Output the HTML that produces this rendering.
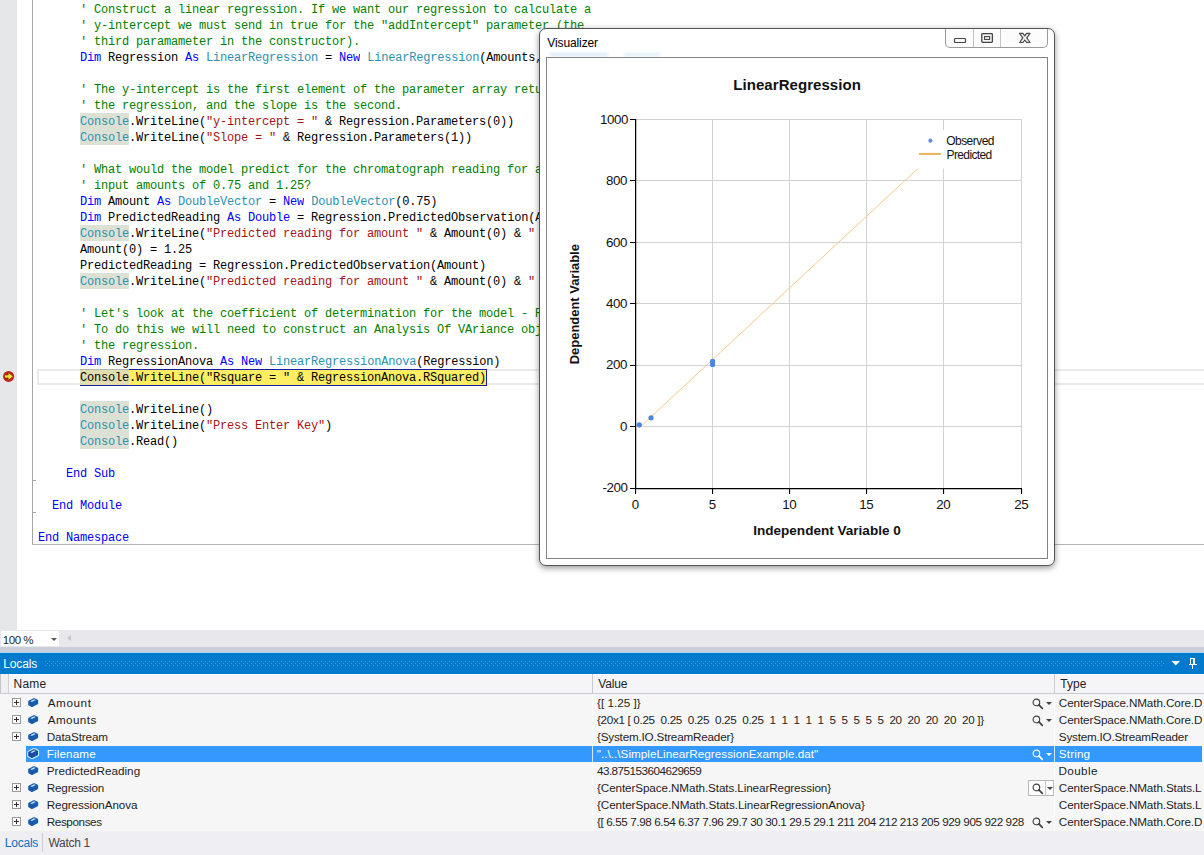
<!DOCTYPE html>
<html><head><meta charset="utf-8"><title>Visualizer</title>
<style>
*{box-sizing:border-box;margin:0;padding:0}
html,body{width:1204px;height:855px;overflow:hidden;background:#fff}
body{position:relative;font-family:"Liberation Sans",sans-serif;font-size:12px;color:#1e1e1e}
.abs{position:absolute}
#margin{left:0;top:0;width:17px;height:630px;background:#e6e7e8}
#outline{left:32px;top:0;width:1px;height:545px;background:#a5a5a5}
#edbot{left:32px;top:544px;width:1172px;height:1px;background:#b4b4b4}
.tick{position:absolute;left:33px;width:3px;height:1px;background:#a5a5a5}
#curline{left:37px;top:369px;width:1180px;height:16px;border:2px solid #eaeaea;border-right:0}
.ln{position:absolute;height:16px;line-height:16px;white-space:pre;font-family:"Liberation Mono",monospace;font-size:12px;letter-spacing:-0.2px;color:#000}
.ln span{display:inline-block;height:16px;line-height:19px;vertical-align:top;overflow:hidden}
.c{color:#008000} .k{color:#0000ff} .t{color:#2b91af} .s{color:#a31515} .n{color:#000}
.r{color:#2b91af;background:#dde1d4}
.cur{top:369px;height:17px!important;line-height:16px}
.ln span.cur1{background:#e0deb0;height:17px;border-top:1px solid #b4b6b0;border-bottom:1px solid #1c1c9e;line-height:17px}
.ln span.cur2{background:#ffee62;height:17px;border-top:1px solid #1c1c9e;border-bottom:1px solid #1c1c9e;border-right:1px solid #1c1c9e;line-height:17px}
/* breakpoint */
#bp{left:2px;top:370px}
/* bottom */
#hscroll{left:0;top:630px;width:1204px;height:17px;background:#e8e8ec}
#zoom{left:1px;top:631px;width:58px;height:15px;background:#fff;font-size:12px;line-height:15px;color:#1e1e1e}
#zoom span{position:absolute;top:1.5px;font-size:11.5px}
#zoomarr{left:50.5px;top:638px;border:3.2px solid transparent;border-top:3.4px solid #555;border-bottom:0}
#scrarr{left:66.5px;top:634.5px;border:3.8px solid transparent;border-right:4px solid #c6c7cf;border-left:0}
#sep1{left:0;top:647px;width:1204px;height:5px;background:#ccced9}
#sep2{left:0;top:651.5px;width:1204px;height:1.5px;background:#a6d3f2}
#tbar{left:0;top:653px;width:1204px;height:21px;background:#007acc;color:#fff}
#tbar span{position:absolute;top:4px;font-size:12px}
#dots{left:45px;top:661px;width:1119px;height:7px}
#hdr{left:0;top:674px;width:1204px;height:20px;background:#f5f5f7;border-top:1px solid #fdfdfe;border-bottom:1px solid #c9cad2}
#hdr span{position:absolute;top:2px;font-size:12px;color:#1e1e1e}
.vsep{position:absolute;top:674px;width:1px;height:19px;background:#c9cbd4}
#grid{left:0;top:694px;width:1204px;height:137px;background:#f6f6f6}
.row{position:absolute;left:0;width:1204px;height:17px;font-size:12px;line-height:16px;white-space:pre;overflow:hidden}
.row::after{content:"";position:absolute;left:0;top:16.5px;width:1204px;height:1px;background:#fbfbfb}
.row span{position:absolute;top:0.5px;height:16.5px}
.row .val{overflow:hidden}
.sel{color:#fff}
.sel::before{content:"";position:absolute;left:26px;top:1px;width:1176px;height:16px;background:#3399ff}
.sel b.v{position:absolute;top:1px;width:1px;height:16px;background:#d6eaff}
.cube{position:absolute;left:27px;top:3px}
.exp{position:absolute;left:12px;top:4px;width:9px;height:9px;border:1px solid #9a9a9a;background:#fcfcfc}
.exp i{position:absolute;left:1px;top:3px;width:5px;height:1px;background:#333}
.exp b{position:absolute;left:3px;top:1px;width:1px;height:5px;background:#333}
.mag{position:absolute;left:1030.5px;top:3px;width:22px;height:14px}
.mag svg{position:absolute;left:1px;top:1px}
.mag .dd{position:absolute;left:15px;top:5px;width:0;height:0;border:3px solid transparent;border-top:3px solid #424242;border-bottom:0}
.mag.box{border:1px solid #b9b9b9;background:#fdfdfd;left:1028px;top:1px;width:26px;height:16px}
.mag.box svg{left:2.5px;top:2px}
.mag.box::after{content:"";position:absolute;left:16px;top:0;width:1px;height:14px;background:#c6c6c6}
.mag.box .dd{left:18px;top:6px}
#tabs{left:0;top:831px;width:1204px;height:24px;background:#efeff3}
#tabs span{position:absolute;top:5px;font-size:12px}
#tabsep{left:42px;top:833px;width:1px;height:19px;background:#ccced9}
#lcol{left:0;top:674px;width:9px;height:19px;background:#f0f0f3;border-right:1px solid #d0d1d8;border-left:1px solid #c4c4c9}
/* window */
#win{left:539px;top:28px;width:516px;height:538px;background:#fff;border:1px solid #555;border-radius:7px;box-shadow:0 2px 6px 0 rgba(0,0,0,.42)}
#wtitle{left:547px;top:36px;font-size:12px;color:#000}
#wtitle span{position:absolute;top:0;white-space:pre}
#client{left:546px;top:57px;width:502px;height:502px;border:1px solid #848484;background:#fff}
#capbtns{left:945px;top:29px;width:103px;height:19px;border:1px solid #9a9a9a;border-top:0;border-radius:0 0 5px 5px;background:#fcfcfc}
.cdiv{position:absolute;top:29px;width:1px;height:18px;background:#c4c4c4}
.chart{position:absolute;left:547px;top:58px}
.tk{font-family:"Liberation Sans",sans-serif;font-size:13.33px;letter-spacing:-0.42px;fill:#111}
.lg{font-family:"Liberation Sans",sans-serif;font-size:12px;fill:#111}
.ttl{font-family:"Liberation Sans",sans-serif;font-size:15px;font-weight:700;fill:#111;letter-spacing:0.08px}
.axt{font-family:"Liberation Sans",sans-serif;font-size:13px;font-weight:700;fill:#111}
</style></head><body>
<div id="margin" class="abs"></div>
<div id="outline" class="abs"></div>
<div id="edbot" class="abs"></div>
<div class="tick" style="top:480px"></div><div class="tick" style="top:512px"></div>
<div id="curline" class="abs"></div>
<div class="ln" style="left:80px;top:1px"><span class="c">' Construct a linear regression. If we want our regression to calculate a</span></div>
<div class="ln" style="left:80px;top:17px"><span class="c">' y-intercept we must send in true for the "addIntercept" parameter (the</span></div>
<div class="ln" style="left:80px;top:33px"><span class="c">' third paramameter in the constructor).</span></div>
<div class="ln" style="left:80px;top:49px"><span class="k">Dim</span><span class="n"> Regression </span><span class="k">As</span><span class="n"> </span><span class="t">LinearRegression</span><span class="n"> = </span><span class="k">New</span><span class="n"> </span><span class="t">LinearRegression</span><span class="n">(Amounts, Responses, True)</span></div>
<div class="ln" style="left:80px;top:81px"><span class="c">' The y-intercept is the first element of the parameter array returned by</span></div>
<div class="ln" style="left:80px;top:97px"><span class="c">' the regression, and the slope is the second.</span></div>
<div class="ln" style="left:80px;top:113px"><span class="r">Console</span><span class="n">.WriteLine(</span><span class="s">"y-intercept = "</span><span class="n"> &amp; Regression.Parameters(0))</span></div>
<div class="ln" style="left:80px;top:129px"><span class="r">Console</span><span class="n">.WriteLine(</span><span class="s">"Slope = "</span><span class="n"> &amp; Regression.Parameters(1))</span></div>
<div class="ln" style="left:80px;top:161px"><span class="c">' What would the model predict for the chromatograph reading for an</span></div>
<div class="ln" style="left:80px;top:177px"><span class="c">' input amounts of 0.75 and 1.25?</span></div>
<div class="ln" style="left:80px;top:193px"><span class="k">Dim</span><span class="n"> Amount </span><span class="k">As</span><span class="n"> </span><span class="t">DoubleVector</span><span class="n"> = </span><span class="k">New</span><span class="n"> </span><span class="t">DoubleVector</span><span class="n">(0.75)</span></div>
<div class="ln" style="left:80px;top:209px"><span class="k">Dim</span><span class="n"> PredictedReading </span><span class="k">As</span><span class="n"> </span><span class="k">Double</span><span class="n"> = Regression.PredictedObservation(Amount)</span></div>
<div class="ln" style="left:80px;top:225px"><span class="r">Console</span><span class="n">.WriteLine(</span><span class="s">"Predicted reading for amount "</span><span class="n"> &amp; Amount(0) &amp; </span><span class="s">" is "</span></div>
<div class="ln" style="left:80px;top:241px"><span class="n">Amount(0) = 1.25</span></div>
<div class="ln" style="left:80px;top:257px"><span class="n">PredictedReading = Regression.PredictedObservation(Amount)</span></div>
<div class="ln" style="left:80px;top:273px"><span class="r">Console</span><span class="n">.WriteLine(</span><span class="s">"Predicted reading for amount "</span><span class="n"> &amp; Amount(0) &amp; </span><span class="s">" is "</span></div>
<div class="ln" style="left:80px;top:305px"><span class="c">' Let's look at the coefficient of determination for the model - Rsquare</span></div>
<div class="ln" style="left:80px;top:321px"><span class="c">' To do this we will need to construct an Analysis Of VAriance object</span></div>
<div class="ln" style="left:80px;top:337px"><span class="c">' the regression.</span></div>
<div class="ln" style="left:80px;top:353px"><span class="k">Dim</span><span class="n"> RegressionAnova </span><span class="k">As</span><span class="n"> </span><span class="k">New</span><span class="n"> </span><span class="t">LinearRegressionAnova</span><span class="n">(Regression)</span></div>
<div class="ln cur" style="left:80px;top:369px"><span class="cur1">Console</span><span class="cur2">.WriteLine("Rsquare = " &amp; RegressionAnova.RSquared)</span></div>
<div class="ln" style="left:80px;top:401px"><span class="r">Console</span><span class="n">.WriteLine()</span></div>
<div class="ln" style="left:80px;top:417px"><span class="r">Console</span><span class="n">.WriteLine(</span><span class="s">"Press Enter Key"</span><span class="n">)</span></div>
<div class="ln" style="left:80px;top:433px"><span class="r">Console</span><span class="n">.Read()</span></div>
<div class="ln" style="left:66px;top:465px"><span class="k">End</span><span class="n"> </span><span class="k">Sub</span></div>
<div class="ln" style="left:52px;top:497px"><span class="k">End</span><span class="n"> </span><span class="k">Module</span></div>
<div class="ln" style="left:38px;top:529px"><span class="k">End</span><span class="n"> </span><span class="k">Namespace</span></div>
<svg id="bp" class="abs" width="13" height="13" viewBox="0 0 13 13"><circle cx="6.6" cy="6.4" r="5.5" fill="#c8201d"/><path d="M2.5 4.9 H6.2 V2.3 L11.3 6.4 L6.2 10.5 V7.9 H2.5 Z" fill="#ffe23c" stroke="#6a2a00" stroke-width="0.7"/></svg>

<div id="hscroll" class="abs"></div>
<div id="zoom" class="abs"><span style="left:1.80px;letter-spacing:-0.480px;">100 %</span></div><div id="zoomarr" class="abs"></div><div id="scrarr" class="abs"></div>
<div id="sep1" class="abs"></div><div id="sep2" class="abs"></div>
<div id="tbar" class="abs"><span style="left:3.22px;letter-spacing:-0.116px;">Locals</span></div>
<svg id="dots" class="abs" width="1119" height="7"><defs><pattern id="dp" width="4" height="4" patternUnits="userSpaceOnUse"><rect x="0" y="0" width="1" height="1" fill="#4da2de"/><rect x="2" y="2" width="1" height="1" fill="#4da2de"/></pattern></defs><rect width="1119" height="5" fill="url(#dp)"/></svg>
<svg class="abs" style="left:1171px;top:660px" width="10" height="7"><path d="M0.5 1 H9 L4.75 5.4 Z" fill="#fff"/></svg>
<svg class="abs" style="left:1188px;top:657px" width="10" height="13" viewBox="1188 657 10 13"><path d="M1190 658 H1195 V664 H1197 V665 H1193 V669 H1192 V665 H1189 V664 H1190 Z M1191 659 V664 H1193 V659 Z" fill="#fff" fill-rule="evenodd"/></svg>
<div id="hdr" class="abs"><span style="left:13.62px;letter-spacing:0.193px;">Name</span><span style="left:598.36px;letter-spacing:-0.160px;">Value</span><span style="left:1060.24px;letter-spacing:0.087px;">Type</span></div>
<div id="lcol" class="abs"></div>
<div class="vsep" style="left:592px"></div><div class="vsep" style="left:1054px"></div>
<div id="grid" class="abs"></div><div class="abs" style="left:592px;top:694px;width:1px;height:137px;background:#fcfcfc"></div><div class="abs" style="left:1054px;top:694px;width:1px;height:137px;background:#fcfcfc"></div>
<div class="row" style="top:694px"><div class="exp"><i></i><b></b></div><svg class="cube" width="13" height="12" viewBox="-1 -1 13 12"><path d="M0.2 3.1 L5.4 0.2 L6.6 0.2 L10.1 1.9 L10.1 6.1 L4.3 9 L3.5 9 L0.2 7.1 Z" fill="#1a5cab"/><path d="M2.4 3.3 L6.2 1.3 L7.6 2 L3.8 4.1 Z" fill="#c9ecff"/><path d="M0.8 3.4 L3.9 5 L3.9 8.6" stroke="#0f4a94" stroke-width="0.7" fill="none" opacity="0.55"/></svg><span style="left:47.68px;letter-spacing:0.594px;font-size:11.7px;">Amount</span><span style="left:597.02px;letter-spacing:0.021px;font-size:11.7px;">{[ 1.25 ]}</span><div class="mag"><svg width="12" height="12" viewBox="0 0 12 12"><circle cx="4.4" cy="4.4" r="3.3" fill="none" stroke="#424242" stroke-width="1.15"/><path d="M6.9 6.9 L10.3 10.3" stroke="#424242" stroke-width="1.7" stroke-linecap="round"/></svg><i class="dd" style="border-top-color:#424242"></i></div><span style="left:1058.82px;letter-spacing:-0.113px;font-size:11.7px;width:143px;overflow:hidden">CenterSpace.NMath.Core.DoubleVector</span></div>
<div class="row" style="top:711px"><div class="exp"><i></i><b></b></div><svg class="cube" width="13" height="12" viewBox="-1 -1 13 12"><path d="M0.2 3.1 L5.4 0.2 L6.6 0.2 L10.1 1.9 L10.1 6.1 L4.3 9 L3.5 9 L0.2 7.1 Z" fill="#1a5cab"/><path d="M2.4 3.3 L6.2 1.3 L7.6 2 L3.8 4.1 Z" fill="#c9ecff"/><path d="M0.8 3.4 L3.9 5 L3.9 8.6" stroke="#0f4a94" stroke-width="0.7" fill="none" opacity="0.55"/></svg><span style="left:47.68px;letter-spacing:0.409px;font-size:11.7px;">Amounts</span><span style="left:597.02px;letter-spacing:-0.335px;font-size:11.7px;">{20x1 [ 0.25  0.25  0.25  0.25  0.25  1  1  1  1  1  5  5  5  5  5  20  20  20  20  20 ]}</span><div class="mag"><svg width="12" height="12" viewBox="0 0 12 12"><circle cx="4.4" cy="4.4" r="3.3" fill="none" stroke="#424242" stroke-width="1.15"/><path d="M6.9 6.9 L10.3 10.3" stroke="#424242" stroke-width="1.7" stroke-linecap="round"/></svg><i class="dd" style="border-top-color:#424242"></i></div><span style="left:1058.82px;letter-spacing:-0.113px;font-size:11.7px;width:143px;overflow:hidden">CenterSpace.NMath.Core.DoubleMatrix</span></div>
<div class="row" style="top:728px"><div class="exp"><i></i><b></b></div><svg class="cube" width="13" height="12" viewBox="-1 -1 13 12"><path d="M0.2 3.1 L5.4 0.2 L6.6 0.2 L10.1 1.9 L10.1 6.1 L4.3 9 L3.5 9 L0.2 7.1 Z" fill="#1a5cab"/><path d="M2.4 3.3 L6.2 1.3 L7.6 2 L3.8 4.1 Z" fill="#c9ecff"/><path d="M0.8 3.4 L3.9 5 L3.9 8.6" stroke="#0f4a94" stroke-width="0.7" fill="none" opacity="0.55"/></svg><span style="left:46.74px;letter-spacing:-0.111px;font-size:11.7px;">DataStream</span><span style="left:597.02px;letter-spacing:-0.199px;font-size:11.7px;">{System.IO.StreamReader}</span><span style="left:1058.87px;letter-spacing:-0.220px;font-size:11.7px;">System.IO.StreamReader</span></div>
<div class="row sel" style="top:745px"><svg class="cube" width="13" height="12" viewBox="-1 -1 13 12"><path d="M0.2 3.1 L5.4 0.2 L6.6 0.2 L10.1 1.9 L10.1 6.1 L4.3 9 L3.5 9 L0.2 7.1 Z" fill="#164f9e" stroke="#d6f4ff" stroke-width="2" stroke-linejoin="round" paint-order="stroke"/><path d="M2.4 3.3 L6.2 1.3 L7.6 2 L3.8 4.1 Z" fill="#c9ecff"/><path d="M0.8 3.4 L3.9 5 L3.9 8.6" stroke="#0f4a94" stroke-width="0.7" fill="none" opacity="0.55"/></svg><span style="left:46.74px;letter-spacing:0.134px;font-size:11.7px;">Filename</span><span style="left:596.71px;letter-spacing:0.037px;font-size:11.7px;">"..\..\SimpleLinearRegressionExample.dat"</span><div class="mag"><svg width="12" height="12" viewBox="0 0 12 12"><circle cx="4.4" cy="4.4" r="3.3" fill="none" stroke="#fff" stroke-width="1.15"/><path d="M6.9 6.9 L10.3 10.3" stroke="#fff" stroke-width="1.7" stroke-linecap="round"/></svg><i class="dd" style="border-top-color:#fff"></i></div><span style="left:1058.87px;letter-spacing:0.142px;font-size:11.7px;">String</span><b class="v" style="left:592px"></b><b class="v" style="left:1054px"></b></div>
<div class="row" style="top:762px"><svg class="cube" width="13" height="12" viewBox="-1 -1 13 12"><path d="M0.2 3.1 L5.4 0.2 L6.6 0.2 L10.1 1.9 L10.1 6.1 L4.3 9 L3.5 9 L0.2 7.1 Z" fill="#1a5cab"/><path d="M2.4 3.3 L6.2 1.3 L7.6 2 L3.8 4.1 Z" fill="#c9ecff"/><path d="M0.8 3.4 L3.9 5 L3.9 8.6" stroke="#0f4a94" stroke-width="0.7" fill="none" opacity="0.55"/></svg><span style="left:46.74px;letter-spacing:0.033px;font-size:11.7px;">PredictedReading</span><span style="left:596.95px;letter-spacing:-0.522px;font-size:11.7px;">43.875153604629659</span><span style="left:1058.44px;letter-spacing:0.395px;font-size:11.7px;">Double</span></div>
<div class="row" style="top:779px"><div class="exp"><i></i><b></b></div><svg class="cube" width="13" height="12" viewBox="-1 -1 13 12"><path d="M0.2 3.1 L5.4 0.2 L6.6 0.2 L10.1 1.9 L10.1 6.1 L4.3 9 L3.5 9 L0.2 7.1 Z" fill="#1a5cab"/><path d="M2.4 3.3 L6.2 1.3 L7.6 2 L3.8 4.1 Z" fill="#c9ecff"/><path d="M0.8 3.4 L3.9 5 L3.9 8.6" stroke="#0f4a94" stroke-width="0.7" fill="none" opacity="0.55"/></svg><span style="left:46.74px;letter-spacing:-0.174px;font-size:11.7px;">Regression</span><span style="left:597.02px;letter-spacing:-0.105px;font-size:11.7px;">{CenterSpace.NMath.Stats.LinearRegression}</span><div class="mag box"><svg width="12" height="12" viewBox="0 0 12 12"><circle cx="4.4" cy="4.4" r="3.3" fill="none" stroke="#424242" stroke-width="1.15"/><path d="M6.9 6.9 L10.3 10.3" stroke="#424242" stroke-width="1.7" stroke-linecap="round"/></svg><i class="dd" style="border-top-color:#424242"></i></div><span style="left:1058.82px;letter-spacing:-0.113px;font-size:11.7px;width:143px;overflow:hidden">CenterSpace.NMath.Stats.LinearRegression</span></div>
<div class="row" style="top:796px"><div class="exp"><i></i><b></b></div><svg class="cube" width="13" height="12" viewBox="-1 -1 13 12"><path d="M0.2 3.1 L5.4 0.2 L6.6 0.2 L10.1 1.9 L10.1 6.1 L4.3 9 L3.5 9 L0.2 7.1 Z" fill="#1a5cab"/><path d="M2.4 3.3 L6.2 1.3 L7.6 2 L3.8 4.1 Z" fill="#c9ecff"/><path d="M0.8 3.4 L3.9 5 L3.9 8.6" stroke="#0f4a94" stroke-width="0.7" fill="none" opacity="0.55"/></svg><span style="left:46.74px;letter-spacing:-0.114px;font-size:11.7px;">RegressionAnova</span><span style="left:597.02px;letter-spacing:-0.082px;font-size:11.7px;">{CenterSpace.NMath.Stats.LinearRegressionAnova}</span><span style="left:1058.82px;letter-spacing:-0.113px;font-size:11.7px;width:143px;overflow:hidden">CenterSpace.NMath.Stats.LinearRegressionAnova</span></div>
<div class="row" style="top:813px"><div class="exp"><i></i><b></b></div><svg class="cube" width="13" height="12" viewBox="-1 -1 13 12"><path d="M0.2 3.1 L5.4 0.2 L6.6 0.2 L10.1 1.9 L10.1 6.1 L4.3 9 L3.5 9 L0.2 7.1 Z" fill="#1a5cab"/><path d="M2.4 3.3 L6.2 1.3 L7.6 2 L3.8 4.1 Z" fill="#c9ecff"/><path d="M0.8 3.4 L3.9 5 L3.9 8.6" stroke="#0f4a94" stroke-width="0.7" fill="none" opacity="0.55"/></svg><span style="left:46.74px;letter-spacing:-0.397px;font-size:11.7px;">Responses</span><span class="val" style="left:597.02px;letter-spacing:-0.399px;font-size:11.7px;width:429.0px">{[ 6.55 7.98 6.54 6.37 7.96 29.7 30 30.1 29.5 29.1 211 204 212 213 205 929 905 922 928 919 ]}</span><div class="mag"><svg width="12" height="12" viewBox="0 0 12 12"><circle cx="4.4" cy="4.4" r="3.3" fill="none" stroke="#424242" stroke-width="1.15"/><path d="M6.9 6.9 L10.3 10.3" stroke="#424242" stroke-width="1.7" stroke-linecap="round"/></svg><i class="dd" style="border-top-color:#424242"></i></div><span style="left:1058.82px;letter-spacing:-0.113px;font-size:11.7px;width:143px;overflow:hidden">CenterSpace.NMath.Core.DoubleVector</span></div>
<div id="tabs" class="abs"><span style="left:4.82px;letter-spacing:-0.236px;color:#0e70c0">Locals</span><span style="left:48.46px;letter-spacing:-0.293px;color:#444">Watch 1</span></div>
<div id="tabsep" class="abs"></div>

<div id="win" class="abs"></div>
<div class="abs" style="left:550px;top:53px;width:58px;height:3px;background:#cfe3f5;filter:blur(1.5px);opacity:.8"></div><div class="abs" style="left:624px;top:53px;width:36px;height:3px;background:#d6e9f7;filter:blur(1.5px);opacity:.8"></div><div id="wtitle" class="abs"><span style="left:0.36px;letter-spacing:-0.118px;">Visualizer</span></div>
<div id="capbtns" class="abs"></div>
<div class="cdiv" style="left:973px"></div><div class="cdiv" style="left:1000px"></div>
<svg class="abs" style="left:953px;top:31px" width="80" height="14" viewBox="953 31 80 14">
<rect x="954.5" y="38.5" width="11" height="4" fill="#fafafa" stroke="#444" stroke-width="1.2" rx="0.8"/>
<rect x="981.8" y="33.6" width="10.6" height="8.8" fill="#f4f4f4" stroke="#444" stroke-width="1.3" rx="0.8"/>
<rect x="984.6" y="36.6" width="5" height="2.8" fill="#fff" stroke="#444" stroke-width="1.1"/>
<path d="M1019.6 33.3 L1023 33.3 L1024.8 35.8 L1026.6 33.3 L1030 33.3 L1026.8 37.9 L1030 42.5 L1026.6 42.5 L1024.8 40 L1023 42.5 L1019.6 42.5 L1022.8 37.9 Z" fill="#eeeeee" stroke="#484848" stroke-width="1.15" stroke-linejoin="round"/>
</svg>
<div id="client" class="abs"></div>
<svg class="chart" width="501" height="500" viewBox="547 58 501 500">
<line x1="712.5" y1="119" x2="712.5" y2="488" stroke="#d2d2d2" stroke-width="1"/>
<line x1="789.5" y1="119" x2="789.5" y2="488" stroke="#d2d2d2" stroke-width="1"/>
<line x1="866.5" y1="119" x2="866.5" y2="488" stroke="#d2d2d2" stroke-width="1"/>
<line x1="943.5" y1="119" x2="943.5" y2="488" stroke="#d2d2d2" stroke-width="1"/>
<line x1="1021.5" y1="119" x2="1021.5" y2="488" stroke="#d2d2d2" stroke-width="1"/>
<line x1="636" y1="119.5" x2="1022" y2="119.5" stroke="#d2d2d2" stroke-width="1"/>
<line x1="636" y1="180.5" x2="1022" y2="180.5" stroke="#d2d2d2" stroke-width="1"/>
<line x1="636" y1="242.5" x2="1022" y2="242.5" stroke="#d2d2d2" stroke-width="1"/>
<line x1="636" y1="303.5" x2="1022" y2="303.5" stroke="#d2d2d2" stroke-width="1"/>
<line x1="636" y1="365.5" x2="1022" y2="365.5" stroke="#d2d2d2" stroke-width="1"/>
<line x1="636" y1="426.5" x2="1022" y2="426.5" stroke="#d2d2d2" stroke-width="1"/>
<line x1="639.3" y1="427.8" x2="943" y2="145.1" stroke="#f2c98a" stroke-width="1"/>
<circle cx="639.3" cy="424.8" r="2.6" fill="#4a86dc"/>
<circle cx="651" cy="417.8" r="2.6" fill="#4a86dc"/>
<circle cx="712.6" cy="361.4" r="2.6" fill="#4a86dc"/>
<circle cx="712.6" cy="364.4" r="2.6" fill="#4a86dc"/>
<rect x="635" y="119" width="1.25" height="370" fill="#000"/>
<rect x="635" y="488" width="387" height="1.25" fill="#000"/>
<rect x="630" y="119" width="5" height="1" fill="#000"/>
<text x="628.1" y="124.0" text-anchor="end" class="tk">1000</text>
<rect x="630" y="180" width="5" height="1" fill="#000"/>
<text x="626.9" y="185.0" text-anchor="end" class="tk">800</text>
<rect x="630" y="242" width="5" height="1" fill="#000"/>
<text x="626.9" y="247.0" text-anchor="end" class="tk">600</text>
<rect x="630" y="303" width="5" height="1" fill="#000"/>
<text x="626.9" y="307.8" text-anchor="end" class="tk">400</text>
<rect x="630" y="365" width="5" height="1" fill="#000"/>
<text x="626.9" y="369.1" text-anchor="end" class="tk">200</text>
<rect x="630" y="426" width="5" height="1" fill="#000"/>
<text x="626.9" y="430.5" text-anchor="end" class="tk">0</text>
<rect x="630" y="488" width="5" height="1" fill="#000"/>
<text x="627.6" y="491.8" text-anchor="end" class="tk">-200</text>
<rect x="635" y="489" width="1.1" height="5" fill="#000"/>
<text x="635.3" y="509" text-anchor="middle" class="tk">0</text>
<rect x="712" y="489" width="1.1" height="5" fill="#000"/>
<text x="712.3" y="509" text-anchor="middle" class="tk">5</text>
<rect x="789" y="489" width="1.1" height="5" fill="#000"/>
<text x="789.3" y="509" text-anchor="middle" class="tk">10</text>
<rect x="866" y="489" width="1.1" height="5" fill="#000"/>
<text x="866.3" y="509" text-anchor="middle" class="tk">15</text>
<rect x="943" y="489" width="1.1" height="5" fill="#000"/>
<text x="943.3" y="509" text-anchor="middle" class="tk">20</text>
<rect x="1021" y="489" width="1.1" height="5" fill="#000"/>
<text x="1021.3" y="509" text-anchor="middle" class="tk">25</text>
<rect x="911" y="130" width="104" height="38.5" fill="#fff"/>
<circle cx="930.4" cy="140.7" r="2.1" fill="#6b8ed6"/>
<line x1="919" y1="153.9" x2="940.8" y2="153.9" stroke="#e6b45a" stroke-width="2"/>
<text x="946.2" y="144.8" class="lg" textLength="48.3" lengthAdjust="spacing">Observed</text>
<text x="946.6" y="158.7" class="lg" textLength="45.6" lengthAdjust="spacing">Predicted</text>
<text x="797.1" y="90" text-anchor="middle" class="ttl" textLength="127.6" lengthAdjust="spacing">LinearRegression</text>
<text x="827" y="535" text-anchor="middle" class="axt" textLength="147.6" lengthAdjust="spacingAndGlyphs">Independent Variable 0</text>
<text transform="translate(579,304.2) rotate(-90)" text-anchor="middle" class="axt" textLength="120.2" lengthAdjust="spacingAndGlyphs">Dependent Variable</text>
</svg>
</body></html>
